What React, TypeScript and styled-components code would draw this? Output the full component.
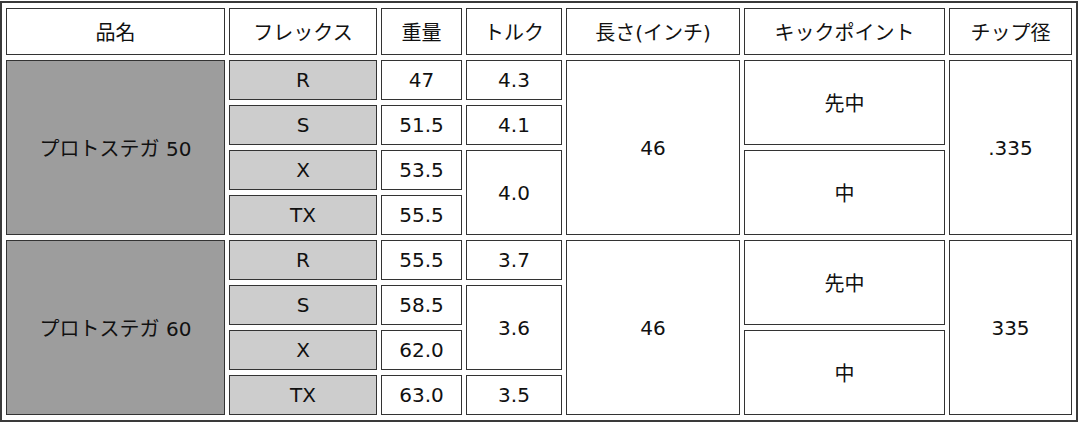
import React from "react";
import styled, { createGlobalStyle } from "styled-components";

const Global = createGlobalStyle`
  html, body { margin: 0; padding: 0; background: #fff; }
  body { font-family: "DejaVu Sans", "Noto Sans CJK JP", sans-serif; }
`;

const Page = styled.div`
  padding: 1px 0 0 0;
`;

const Table = styled.table`
  width: 1078px;
  table-layout: fixed;
  border-collapse: separate;
  border-spacing: 4px 5px;
  border: 2px solid #3a3a3a;
  font-family: "DejaVu Sans", "Noto Sans CJK JP", sans-serif;
  font-size: 20px;
  color: #111;
`;

const Col = styled.col<{ $w: number }>`
  width: ${(p) => p.$w}px;
`;

const Head = styled.th`
  box-sizing: border-box;
  height: 47px;
  border: 1px solid #333;
  background: #fff;
  font-weight: normal;
  text-align: center;
  vertical-align: middle;
  padding: 0;
`;

type Variant = "name" | "flex" | "plain";

const Cell = styled.td<{ $v?: Variant }>`
  box-sizing: border-box;
  height: 40px;
  border: 1px solid #333;
  padding: 0;
  text-align: center;
  vertical-align: middle;
  background: ${(p) =>
    p.$v === "name" ? "#9d9d9d" : p.$v === "flex" ? "#cdcdcd" : "#fff"};
`;

const widths = [219, 148, 81, 96, 174, 201, 123];
const headers = ["品名", "フレックス", "重量", "トルク", "長さ(インチ)", "キックポイント", "チップ径"];

export default function App() {
  return (
    <Page>
      <Global />
      <Table>
        <colgroup>
          {widths.map((w, i) => (
            <Col key={i} $w={w} />
          ))}
        </colgroup>
        <thead>
          <tr>
            {headers.map((h) => (
              <Head key={h}>{h}</Head>
            ))}
          </tr>
        </thead>
        <tbody>
          <tr>
            <Cell $v="name" rowSpan={4}>プロトステガ 50</Cell>
            <Cell $v="flex">R</Cell>
            <Cell>47</Cell>
            <Cell>4.3</Cell>
            <Cell rowSpan={4}>46</Cell>
            <Cell rowSpan={2}>先中</Cell>
            <Cell rowSpan={4}>.335</Cell>
          </tr>
          <tr>
            <Cell $v="flex">S</Cell>
            <Cell>51.5</Cell>
            <Cell>4.1</Cell>
          </tr>
          <tr>
            <Cell $v="flex">X</Cell>
            <Cell>53.5</Cell>
            <Cell rowSpan={2}>4.0</Cell>
            <Cell rowSpan={2}>中</Cell>
          </tr>
          <tr>
            <Cell $v="flex">TX</Cell>
            <Cell>55.5</Cell>
          </tr>
          <tr>
            <Cell $v="name" rowSpan={4}>プロトステガ 60</Cell>
            <Cell $v="flex">R</Cell>
            <Cell>55.5</Cell>
            <Cell>3.7</Cell>
            <Cell rowSpan={4}>46</Cell>
            <Cell rowSpan={2}>先中</Cell>
            <Cell rowSpan={4}>335</Cell>
          </tr>
          <tr>
            <Cell $v="flex">S</Cell>
            <Cell>58.5</Cell>
            <Cell rowSpan={2}>3.6</Cell>
          </tr>
          <tr>
            <Cell $v="flex">X</Cell>
            <Cell>62.0</Cell>
            <Cell rowSpan={2}>中</Cell>
          </tr>
          <tr>
            <Cell $v="flex">TX</Cell>
            <Cell>63.0</Cell>
            <Cell>3.5</Cell>
          </tr>
        </tbody>
      </Table>
    </Page>
  );
}
